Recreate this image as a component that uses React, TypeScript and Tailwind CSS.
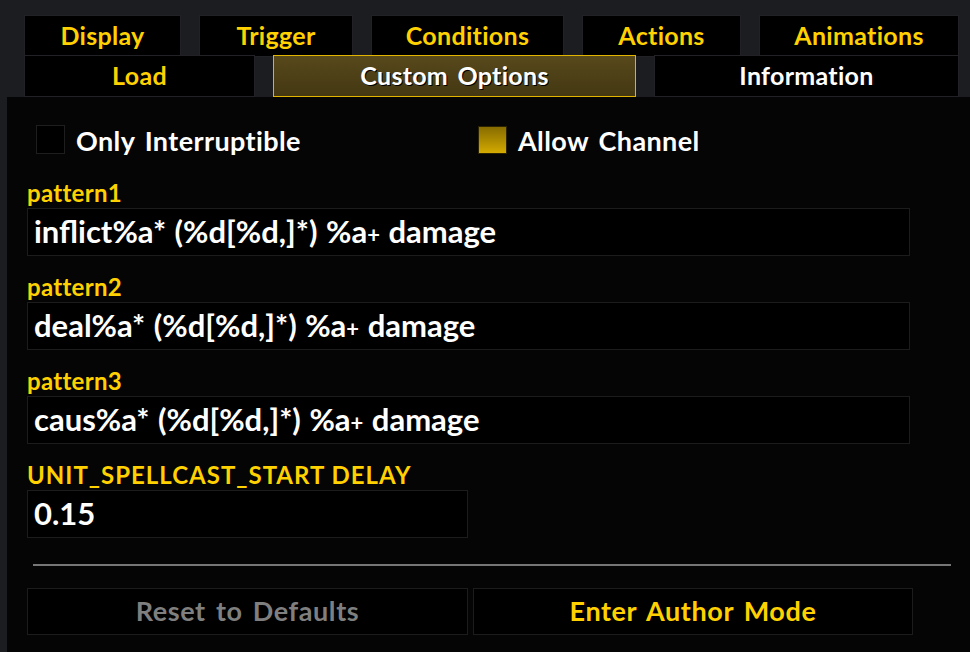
import { FunctionComponent, ReactNode } from "react";

const font = "font-['Lato','Open_Sans',sans-serif] font-bold";

const topTabs = [
  { label: "Display", w: "w-[157px]" },
  { label: "Trigger", w: "w-[154px]" },
  { label: "Conditions", w: "w-[193px]" },
  { label: "Actions", w: "w-[159px]" },
  { label: "Animations", w: "w-[200px]" },
];

const plus = <span className="text-[22px]">+</span>;

const patterns = [
  { label: "pattern1", value: <>inflict%a* (%d[%d,]*) %a{plus} damage</> },
  { label: "pattern2", value: <>deal%a* (%d[%d,]*) %a{plus} damage</> },
  { label: "pattern3", value: <>caus%a* (%d[%d,]*) %a{plus} damage</> },
];

const Field: FunctionComponent<{ label: string; value: ReactNode; w: string; track?: string }> = ({
  label,
  value,
  w,
  track = "tracking-[0.3px]",
}) => {
  return (
    <div className="flex flex-col">
      <div className={`h-[26px] text-[24px] leading-[22px] text-[#ffd100] ${track}`}>{label}</div>
      <div
        className={`${w} h-[48px] border border-[#1c1c1c] bg-black pl-[6px] text-[31px] leading-[45px] text-white [word-spacing:1px]`}
      >
        {value}
      </div>
    </div>
  );
};

const App: FunctionComponent = () => {
  return (
    <div className={`${font} flex h-[652px] w-[970px] flex-col overflow-hidden bg-[#1c1d21] pt-[15px]`}>
      {/* tab rows */}
      <div className="flex gap-[18px] pl-[24px] text-[25px] tracking-[0.3px]">
        {topTabs.map((t) => (
          <div
            key={t.label}
            className={`${t.w} flex h-[42px] items-center justify-center border border-[#222226] bg-black pb-[1px] text-[#ffd100]`}
          >
            {t.label}
          </div>
        ))}
      </div>
      <div className="mt-[-2px] flex gap-[18px] pl-[24px] text-[25px] tracking-[0.3px] [word-spacing:3px]">
        <div className="flex h-[42px] w-[231px] items-center justify-center border border-[#222226] bg-black pb-[1px] text-[#ffd100]">
          Load
        </div>
        <div className="flex h-[42px] w-[363px] items-center justify-center border border-[#e0b400] bg-linear-to-b from-[#58491b] to-[#443813] pb-[1px] text-white [text-shadow:1px_1px_0_#000]">
          Custom Options
        </div>
        <div className="flex h-[42px] w-[305px] items-center justify-center border border-[#222226] bg-black pb-[1px] text-white">
          Information
        </div>
      </div>

      {/* panel */}
      <div className="ml-[7px] flex flex-1 flex-col bg-[#050505] pl-[20px] pt-[28px]">
        <div className="flex h-[29px] items-center pl-[9px] text-[27px] tracking-[0.4px] text-white [word-spacing:3px]">
          <div className="flex w-[442px] items-center gap-[11px]">
            <div className="h-[29px] w-[29px] border border-[#1e1e1e] bg-black" />
            <span className="pt-[3px]">Only Interruptible</span>
          </div>
          <div className="flex items-center gap-[11px]">
            <div className="h-[28px] w-[29px] border border-[#2a2200] bg-linear-to-b from-[#876c00] to-[#d4ab00]" />
            <span className="pt-[3px]">Allow Channel</span>
          </div>
        </div>

        <div className="mt-[28px] flex flex-col gap-[20px]">
          {patterns.map((p) => (
            <Field key={p.label} label={p.label} value={p.value} w="w-[883px]" />
          ))}
          <Field
            label="UNIT_SPELLCAST_START DELAY"
            value="0.15"
            w="w-[441px]"
            track="tracking-[1px]"
          />
        </div>

        <div className="ml-[6px] mt-[26px] h-[2px] w-[918px] bg-[#767676]" />

        <div className="mt-[22px] flex gap-[5px] text-[27px] tracking-[0.6px] [word-spacing:3px]">
          <div className="flex h-[47px] w-[441px] items-center justify-center border border-[#1c1c1c] bg-black text-[#7f7f7f]">
            Reset to Defaults
          </div>
          <div className="flex h-[47px] w-[440px] items-center justify-center border border-[#1c1c1c] bg-black text-[#ffd100]">
            Enter Author Mode
          </div>
        </div>
      </div>
    </div>
  );
};

export default App;
